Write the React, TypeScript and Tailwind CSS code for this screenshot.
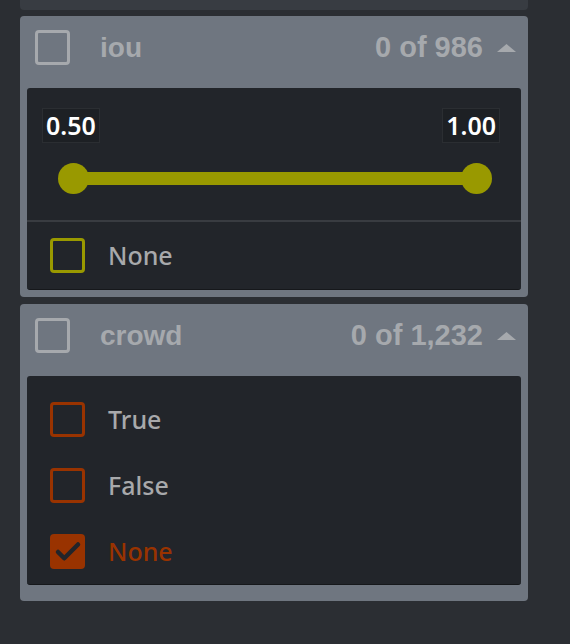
import { Check } from 'lucide-react'

const headFont = { fontFamily: '"Liberation Sans", Arial, sans-serif' }
const itemFont = { fontFamily: '"Noto Sans", "Open Sans", sans-serif' }

function HeaderBox() {
  return <div className="w-[35px] h-[35px] rounded-[4px] border-[3px] border-[#a6a9ad] shrink-0" />
}

function Caret() {
  return (
    <svg width="19" height="8" viewBox="0 0 19 8" className="ml-[14px] shrink-0">
      <polygon points="0,8 9.5,0 19,8" fill="#a6a9ad" />
    </svg>
  )
}

function PanelHeader({ name, count }: { name: string; count: string }) {
  return (
    <div className="h-[72px] flex items-center pl-[15px] pr-[12px] pb-[9px]" style={headFont}>
      <HeaderBox />
      <span className="ml-[30px] text-[28px] font-bold text-[#a6a9ad] leading-none">{name}</span>
      <span className="ml-auto text-[29px] font-bold text-[#a6a9ad] leading-none">{count}</span>
      <Caret />
    </div>
  )
}

function Option({ label, color, checked }: { label: string; color: 'olive' | 'rust'; checked?: boolean }) {
  const border = color === 'olive' ? 'border-[#999900]' : 'border-[#993300]'
  return (
    <div className="flex items-center h-[35px]">
      {checked ? (
        <div className="w-[35px] h-[35px] rounded-[4px] bg-[#993300] flex items-center justify-center">
          <Check size={30} strokeWidth={3.6} color="#22252a" />
        </div>
      ) : (
        <div className={`w-[35px] h-[35px] rounded-[4px] border-[3px] ${border}`} />
      )}
      <span
        className={`ml-[23px] text-[25px] font-medium leading-none ${checked ? 'text-[#993300]' : 'text-[#a8a9ab]'}`}
        style={itemFont}
      >
        {label}
      </span>
    </div>
  )
}

function ValueTag({ v }: { v: string }) {
  return (
    <div
      className="h-[35px] px-[3px] flex items-center bg-[#1d2024] border border-[#2b2e32] text-white text-[25px] font-semibold leading-none"
      style={itemFont}
    >
      {v}
    </div>
  )
}

export default function App() {
  return (
    <div className="w-[570px] h-[644px] bg-[#2b2e33] overflow-hidden">
      <div className="ml-[20px] w-[508px]">
        <div className="h-[10px] bg-[#383c42] rounded-b-[4px]" />

        <div className="mt-[6px] bg-[#6f7680] rounded-[4px] px-[7px] pb-[7px]">
          <div className="-mx-[7px]">
            <PanelHeader name="iou" count="0 of 986" />
          </div>
          <div className="bg-[#22252a] rounded-[3px] border-b border-[#16181b]">
            <div className="pt-[20px] pl-[15px] pr-[21px] flex justify-between">
              <ValueTag v="0.50" />
              <ValueTag v="1.00" />
            </div>
            <div className="mt-[20px] ml-[31px] w-[434px] h-[31px] relative flex justify-between">
              <div className="absolute left-[15px] right-[15px] top-[9px] h-[13px] bg-[#999900]" />
              <div className="relative w-[31px] h-[31px] rounded-full bg-[#999900]" />
              <div className="relative w-[31px] h-[31px] rounded-full bg-[#999900]" />
            </div>
            <div className="mt-[26px] h-[2px] bg-[#393c41]" />
            <div className="pl-[23px] pt-[16px] pb-[16px]">
              <Option label="None" color="olive" />
            </div>
          </div>
        </div>

        <div className="mt-[7px] bg-[#6f7680] rounded-[4px] px-[7px] pb-[16px]">
          <div className="-mx-[7px]">
            <PanelHeader name="crowd" count="0 of 1,232" />
          </div>
          <div className="bg-[#22252a] rounded-[3px] border-b border-[#16181b] pl-[23px] pt-[26px] pb-[15px] flex flex-col gap-[31px]">
            <Option label="True" color="rust" />
            <Option label="False" color="rust" />
            <Option label="None" color="rust" checked />
          </div>
        </div>
      </div>
    </div>
  )
}
